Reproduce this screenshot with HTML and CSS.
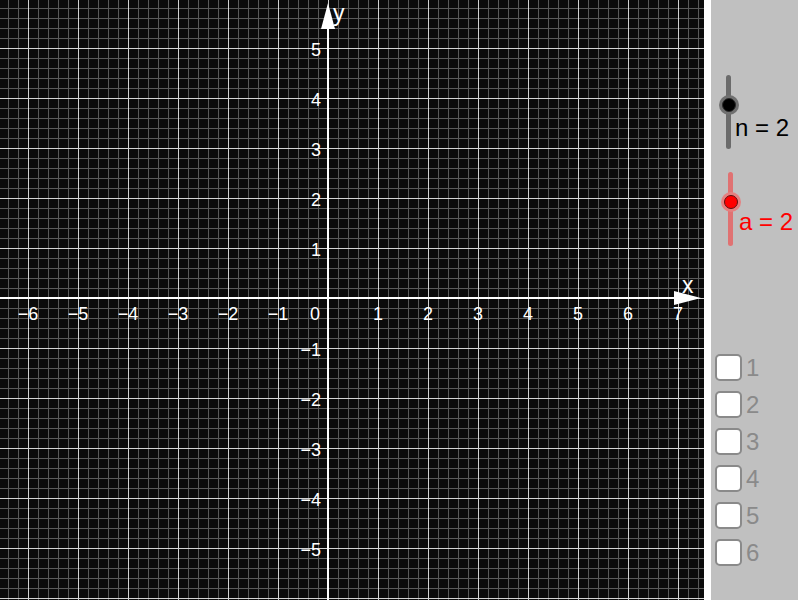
FILE: index.html
```html
<!DOCTYPE html>
<html>
<head>
<meta charset="utf-8">
<link rel="stylesheet" href="styles.css">
</head>
<body>
<div class="app">
  <div class="graphics">
    <svg class="plot" width="704" height="600" viewBox="0 0 704 600" xmlns="http://www.w3.org/2000/svg">
      <defs>
        <pattern id="minor" width="10" height="10" patternUnits="userSpaceOnUse" x="8" y="8">
          <path d="M0.5 0V10M0 0.5H10" stroke="#5a5a5a" stroke-width="1" fill="none"/>
        </pattern>
        <pattern id="major" width="50" height="50" patternUnits="userSpaceOnUse" x="28" y="48">
          <path d="M0.5 0V50M0 0.5H50" stroke="#d4d4d4" stroke-width="1" fill="none"/>
        </pattern>
      </defs>
      <rect width="704" height="600" fill="#0b0b0b"/>
      <rect width="704" height="600" fill="url(#minor)"/>
      <rect width="704" height="600" fill="url(#major)"/>
      <rect x="0" y="297" width="680" height="2" fill="#ffffff"/>
      <rect x="327" y="20" width="2" height="580" fill="#ffffff"/>
      <polygon points="328,3 321,29 335,29" fill="#ffffff"/>
      <polygon points="701,298 674,291 674,305" fill="#ffffff"/>
      <text class="axis-name" x="333" y="21">y</text>
      <text class="axis-name" x="682" y="293">x</text>
      <g class="tick-x">
        <text x="28" y="320">−6</text>
        <text x="78" y="320">−5</text>
        <text x="128" y="320">−4</text>
        <text x="178" y="320">−3</text>
        <text x="228" y="320">−2</text>
        <text x="278" y="320">−1</text>
        <text x="315" y="320">0</text>
        <text x="378" y="320">1</text>
        <text x="428" y="320">2</text>
        <text x="478" y="320">3</text>
        <text x="528" y="320">4</text>
        <text x="578" y="320">5</text>
        <text x="628" y="320">6</text>
        <text x="678" y="320">7</text>
      </g>
      <g class="tick-y">
        <text x="321" y="56">5</text>
        <text x="321" y="106">4</text>
        <text x="321" y="156">3</text>
        <text x="321" y="206">2</text>
        <text x="321" y="256">1</text>
        <text x="321" y="356">−1</text>
        <text x="321" y="406">−2</text>
        <text x="321" y="456">−3</text>
        <text x="321" y="506">−4</text>
        <text x="321" y="556">−5</text>
      </g>
    </svg>
  </div>
  <div class="sidebar">
    <div class="slider slider-n">
      <div class="track">
        <span class="knob"></span>
      </div>
      <div class="slider-label">n = 2</div>
    </div>
    <div class="slider slider-a">
      <div class="track">
        <span class="knob"></span>
      </div>
      <div class="slider-label">a = 2</div>
    </div>
    <div class="checks">
      <label class="check"><span class="box"></span><span class="check-label">1</span></label>
      <label class="check"><span class="box"></span><span class="check-label">2</span></label>
      <label class="check"><span class="box"></span><span class="check-label">3</span></label>
      <label class="check"><span class="box"></span><span class="check-label">4</span></label>
      <label class="check"><span class="box"></span><span class="check-label">5</span></label>
      <label class="check"><span class="box"></span><span class="check-label">6</span></label>
    </div>
  </div>
</div>
</body>
</html>
```
FILE: styles.css
```css
html, body {
  margin: 0;
  padding: 0;
  background: #ffffff;
  width: 800px;
  height: 600px;
  overflow: hidden;
  font-family: "Liberation Sans", Arial, sans-serif;
}

.app {
  display: flex;
  width: 800px;
  height: 600px;
}

.graphics {
  width: 704px;
  height: 600px;
  flex: none;
}

.plot {
  display: block;
}

.plot text {
  font-family: "Liberation Sans", Arial, sans-serif;
  fill: #ffffff;
}

.axis-name {
  font-size: 23px;
}

.tick-x text {
  font-size: 18px;
  text-anchor: middle;
}

.tick-y text {
  font-size: 18px;
  text-anchor: end;
}

.sidebar {
  width: 87px;
  height: 600px;
  margin-left: 7px;
  background: #c0c0c0;
  box-sizing: border-box;
  padding-top: 75px;
  display: flex;
  flex-direction: column;
  flex: none;
}

.slider {
  display: flex;
  align-items: flex-start;
  height: 74px;
}

.slider-n {
  margin-left: 15px;
}

.slider-a {
  margin-left: 17px;
  margin-top: 23px;
}

.track {
  position: relative;
  width: 5px;
  height: 74px;
  border-radius: 3px;
  flex: none;
}

.slider-n .track {
  background: #6b6b6b;
}

.slider-a .track {
  background: #e07272;
}

.knob {
  position: absolute;
  left: -7.5px;
  top: 20px;
  width: 20px;
  height: 20px;
  border-radius: 50%;
  box-sizing: border-box;
}

.knob::after {
  content: "";
  position: absolute;
  left: 3px;
  top: 3px;
  width: 14px;
  height: 14px;
  border-radius: 50%;
  box-sizing: border-box;
}

.slider-n .knob {
  background: #707070;
}

.slider-n .knob::after {
  background: #000000;
  border: 1px solid #2a2a2a;
}

.slider-a .knob {
  background: #e48080;
  left: -7px;
}

.slider-a .knob::after {
  background: #ff0000;
  border: 1px solid #5a1010;
}

.slider-label {
  font-size: 24px;
  line-height: 28px;
  white-space: nowrap;
  margin-left: 4px;
}

.slider-n .slider-label {
  color: #000000;
  margin-top: 39px;
}

.slider-a .slider-label {
  color: #ff0000;
  margin-top: 36px;
  margin-left: 6px;
}

.checks {
  margin-top: 108px;
  margin-left: 4px;
  display: flex;
  flex-direction: column;
  gap: 10px;
}

.check {
  display: flex;
  align-items: center;
  height: 27px;
}

.box {
  width: 27px;
  height: 27px;
  box-sizing: border-box;
  border: 2px solid #8a8a8a;
  border-radius: 5px;
  background: #ffffff;
  flex: none;
}

.check-label {
  font-size: 24px;
  line-height: 27px;
  color: #8a8a8a;
  margin-left: 4px;
}
```
